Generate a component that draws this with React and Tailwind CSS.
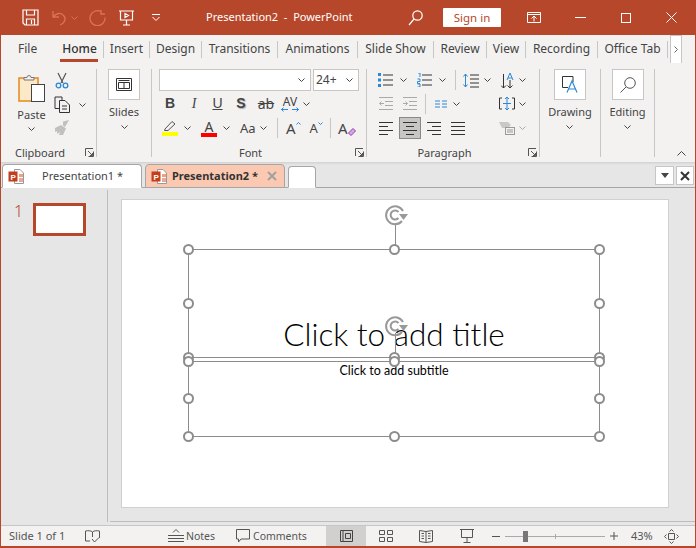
const Chev = ({ className = '', color = '#444' }) => (
  <svg width="7" height="4" viewBox="0 0 7 4" className={`shrink-0 ${className}`} fill="none" stroke={color} strokeWidth="1">
    <path d="M0.5 0.5 3.5 3.5 6.5 0.5" />
  </svg>
);

const Launcher = () => (
  <svg width="9" height="9" viewBox="0 0 9 9" fill="none" stroke="#555" strokeWidth="1">
    <path d="M0.5 8V0.5H8M8.5 3.5V8.5H3.5M3 3 7.5 7.5M7.5 5V7.5H5" />
  </svg>
);

const Lines = ({ w = 14, d }) => (
  <svg width={w} height="14" viewBox={`0 0 ${w} 14`} fill="none" stroke="#333" strokeWidth="1">
    <path d={d} />
  </svg>
);

const PptIcon = () => (
  <svg width="17" height="17" viewBox="0 0 17 17" className="shrink-0">
    <path d="M6.5 1.5H12L15.5 5V15.5H6.5Z" fill="#fff" stroke="#999" />
    <path d="M11 6h4v3h-4z" fill="#f0a080" />
    <path d="M11 11h4M11 13h4" stroke="#d35230" />
    <rect x="0.5" y="3.5" width="9" height="10" fill="#c43e1c" />
    <text x="2.5" y="11.5" fontSize="8" fontWeight="700" fontFamily="Liberation Sans, sans-serif" fill="#fff">P</text>
  </svg>
);

const Handle = ({ className }) => (
  <div className={`absolute h-[11px] w-[11px] rounded-full border-2 border-[#8c8c8c] bg-white ${className}`} />
);

const RotateIcon = ({ className }) => (
  <svg width="26" height="24" viewBox="0 0 26 24" className={`absolute ${className}`} fill="none" stroke="#999" strokeWidth="2">
    <path d="M18 17A9 9 0 1 1 19 7" />
    <path d="M14.500 14A4.500 4.500 0 1 1 14.500 8" />
    <path d="M15 10 24 10 19.500 16Z" fill="#999" stroke="none" />
  </svg>
);

function Placeholder({ className, children }) {
  return (
    <div className={`absolute left-[66px] w-[412px] border border-[#8c8c8c] ${className}`}>
      {children}
      <Handle className="left-[-6px] top-[-6px]" />
      <Handle className="left-[200px] top-[-6px]" />
      <Handle className="right-[-6px] top-[-6px]" />
      <Handle className="left-[-6px] top-[calc(50%-6px)]" />
      <Handle className="right-[-6px] top-[calc(50%-6px)]" />
      <Handle className="left-[-6px] bottom-[-6px]" />
      <Handle className="left-[200px] bottom-[-6px]" />
      <Handle className="right-[-6px] bottom-[-6px]" />
    </div>
  );
}

const tabs = [
  ['Insert', 'w-[45px]'],
  ['Design', 'w-[51px]'],
  ['Transitions', 'w-[75px]'],
  ['Animations', 'w-[79px]'],
  ['Slide Show', 'w-[75px]'],
  ['Review', 'w-[52px]'],
  ['View', 'w-[38px]'],
  ['Recording', 'w-[71px]'],
  ['Office Tab', 'w-[69px]'],
];

const Sep = ({ className = 'h-[88px] mt-[6px]' }) => <div className={`w-px shrink-0 bg-[#c8c6c4] ${className}`} />;

function Group({ className, label, launcher, children }) {
  return (
    <div className={`flex shrink-0 flex-col pt-[6px] ${className}`}>
      <div className="h-[76px]">{children}</div>
      <div className="flex h-[14px] items-center text-[11px] leading-none text-[#444]">
        <span className="flex-1 pr-[6px] text-center">{label}</span>
        {launcher && <span className="mr-[2px] flex"><Launcher /></span>}
      </div>
    </div>
  );
}

function BigButton({ label, children }) {
  return (
    <div className="flex flex-col items-center">
      <div className="flex h-[31px] w-[32px] items-center justify-center border border-[#c8c6c4] bg-white">{children}</div>
      <span className="mt-[4px] text-[11px] leading-[16px] text-[#444]">{label}</span>
      <Chev className="mt-[5px]" />
    </div>
  );
}

export default function App() {
  return (
    <div className="flex h-[548px] w-[696px] flex-col overflow-hidden border-x border-b-2 border-[#b7472a] bg-[#e6e6e6] font-['Noto_Sans',sans-serif] text-[#444]">
      {/* title bar */}
      <div className="flex h-[35px] shrink-0 items-center bg-[#b7472a] text-white">
        <svg width="17" height="17" viewBox="0 0 17 17" className="ml-[21px]" fill="none" stroke="#fff" strokeWidth="1.200">
          <path d="M1 1H16V16H3L1 14Z M4.500 1V6H12.500V1 M4.500 16V10H12.500V16 M9.500 11V15" />
        </svg>
        <svg width="15" height="16" viewBox="0 0 15 16" className="ml-[13px]" fill="none" stroke="#d9735a" strokeWidth="1.300">
          <path d="M1 1V7H7M1 7C4 3 9 2 12 6C15 10 11 14 8 15" />
        </svg>
        <Chev className="ml-[4px]" color="#d9735a" />
        <svg width="17" height="17" viewBox="0 0 17 17" className="ml-[11px]" fill="none" stroke="#d9735a" strokeWidth="1.300">
          <path d="M12 2.500A7.500 7.500 0 1 0 16 8.500M12 1V5H16" />
        </svg>
        <svg width="15" height="16" viewBox="0 0 15 16" className="ml-[13px]" fill="none" stroke="#fff" strokeWidth="1.200">
          <path d="M0 1H15M1.500 1V10H13.500V1M7.500 10V15M4 15H11M6 3.500V7.500L9.500 5.500Z" />
        </svg>
        <svg width="8" height="7" viewBox="0 0 8 7" className="ml-[18px]" fill="none" stroke="#fff">
          <path d="M0 0.500H8M0.500 3 4 6.500 7.500 3" />
        </svg>
        <span className="ml-[46px] w-[150px] whitespace-nowrap text-[11px]">Presentation2 &nbsp;-&nbsp; PowerPoint</span>
        <svg width="15" height="16" viewBox="0 0 15 16" className="ml-[52px]" fill="none" stroke="#fff" strokeWidth="1.200">
          <circle cx="9.500" cy="5.500" r="4.700" />
          <path d="M6 9 1 15" />
        </svg>
        <div className="ml-[20px] flex h-[19px] w-[58px] items-center justify-center rounded-[1px] bg-white text-[11.500px] text-[#b7472a]">Sign in</div>
        <svg width="14" height="11" viewBox="0 0 14 11" className="ml-[26px]" fill="none" stroke="#fff">
          <path d="M0.500 0.500H13.500V10.500H0.500ZM0.500 2.500H13.500M7 9.500V4.500M4.500 6.500 7 4 9.500 6.500" />
        </svg>
        <div className="ml-[34px] h-px w-[11px] bg-white" />
        <div className="ml-[35px] h-[10px] w-[10px] border border-white" />
        <svg width="11" height="11" viewBox="0 0 11 11" className="ml-[35px]" fill="none" stroke="#fff">
          <path d="M0.500 0.500 10.500 10.500M10.500 0.500 0.500 10.500" />
        </svg>
      </div>

      {/* ribbon tabs */}
      <div className="flex h-[28px] shrink-0 items-center bg-[#f3f2f1] text-[12px]">
        <div className="w-[55px] pl-[17px]">File</div>
        <div className="relative flex h-full w-[47px] items-center justify-center font-medium text-[#333]">
          Home
          <div className="absolute bottom-[1px] left-[4px] h-[3px] w-[38px] bg-[#b7472a]" />
        </div>
        {tabs.map(([name, width]) => (
          <div key={name} className="flex items-center">
            <Sep className="h-[17px]" />
            <div className={`whitespace-nowrap text-center ${width}`}>{name}</div>
          </div>
        ))}
        <Sep className="h-[17px]" />
        <div className="ml-[2px] flex h-[29px] w-[12px] items-center justify-center self-start border border-[#c8c6c4] bg-white">
          <svg width="4" height="7" viewBox="0 0 4 7" fill="none" stroke="#666"><path d="M0.500 0.500 3.500 3.500 0.500 6.500" /></svg>
        </div>
      </div>

      {/* ribbon */}
      <div className="flex h-[99px] shrink-0 bg-[#f3f2f1]">
        <Group className="w-[95px]" label="Clipboard" launcher>
          <div className="flex">
            <div className="ml-[17px] flex w-[27px] flex-col items-center pt-[6px]">
              <svg width="28" height="28" viewBox="0 0 28 28" fill="none">
                <rect x="1" y="3" width="19" height="23" fill="#fbe9c8" stroke="#e8871e" strokeWidth="1.500" />
                <path d="M6 5V2.500H9A2 2 0 0 1 13 2.500H16V5Z" fill="#f3f2f1" stroke="#777" />
                <rect x="13.500" y="9.500" width="13" height="17" fill="#fff" stroke="#444" />
              </svg>
              <span className="mt-[4px] text-[11px] leading-[16px]">Paste</span>
              <Chev className="mt-[4px]" />
            </div>
            <div className="ml-[9px] flex flex-col">
              <svg width="14" height="17" viewBox="0 0 14 17" className="ml-[1px] mt-[3px]" fill="none">
                <path d="M3 1 8 11M11 1 6 11" stroke="#555" strokeWidth="1.200" />
                <circle cx="3.500" cy="13.500" r="2.300" stroke="#2b88d8" strokeWidth="1.300" />
                <circle cx="10.500" cy="13.500" r="2.300" stroke="#2b88d8" strokeWidth="1.300" />
              </svg>
              <div className="mt-[7px] flex items-center">
                <svg width="17" height="17" viewBox="0 0 17 17" fill="none" stroke="#333">
                  <path d="M5.500 12.500H1V1H8V4M5.500 4.500H11L15.500 9V16.500H5.500ZM8 10H13M8 13H13" />
                </svg>
                <Chev className="ml-[8px]" />
              </div>
              <svg width="16" height="16" viewBox="0 0 16 16" className="mt-[7px]" fill="#c0c0c0">
                <path d="M9 1.500 15 0 11 7 9 5.500ZM1 8 7 5 12 8.500 9 15 5 15 6 12 3 14 3 11 1 12Z" />
              </svg>
            </div>
          </div>
        </Group>
        <Sep />
        <Group className="w-[54px]" label="">
          <div className="flex justify-center">
            <BigButton label="Slides">
              <svg width="16" height="13" viewBox="0 0 16 13" fill="none" stroke="#333">
                <path d="M0.500 0.500H15.500V12.500H0.500ZM2.500 2.500H13.500M2.500 4.500H13.500V10.500H2.500ZM8 4.500V10.500" />
              </svg>
            </BigButton>
          </div>
        </Group>
        <Sep />

        <Group className="w-[214px]" label="Font" launcher>
          <div className="flex h-[22px] pl-[7px]">
            <div className="flex w-[152px] items-center justify-end border border-[#c8c6c4] bg-white pr-[5px]"><Chev /></div>
            <div className="ml-[2px] flex w-[46px] items-center justify-between border border-[#c8c6c4] bg-white pl-[2px] pr-[5px] text-[12px]">24+<Chev /></div>
          </div>
          <div className="flex h-[25px] items-center pl-[6px] text-[14px] text-[#444]">
            <span className="w-[24px] text-center font-['Liberation_Sans',sans-serif] font-bold">B</span>
            <span className="w-[24px] text-center font-['Liberation_Serif',serif] italic">I</span>
            <span className="w-[23px] text-center font-['Liberation_Sans',sans-serif] underline">U</span>
            <span className="w-[24px] text-center font-['Liberation_Sans',sans-serif] font-bold [text-shadow:1px_1px_1px_#aaa]">S</span>
            <span className="w-[26px] text-center line-through">ab</span>
            <div className="flex w-[22px] flex-col items-center">
              <span className="text-[12px] leading-[11px]">AV</span>
              <svg width="18" height="5" viewBox="0 0 18 5" fill="none" stroke="#2b88d8"><path d="M0 2.500H7M2.500 0.500 0.500 2.500 2.500 4.500M11 2.500H18M15.500 0.500 17.500 2.500 15.500 4.500" /></svg>
            </div>
            <Chev className="ml-[2px]" />
          </div>
          <div className="flex h-[24px] items-center">
            <div className="ml-[10px] flex w-[16px] flex-col items-center">
              <svg width="14" height="12" viewBox="0 0 14 12" fill="none" stroke="#555"><path d="M2 9 9 1.500 12 4 5 10.500H1.500Z" /></svg>
              <div className="h-[4px] w-[16px] bg-[#ffff00]" />
            </div>
            <Chev className="ml-[6px]" />
            <div className="ml-[10px] flex w-[16px] flex-col items-center">
              <span className="text-[14px] leading-[13px]">A</span>
              <div className="h-[4px] w-[16px] bg-[#ff0000]" />
            </div>
            <Chev className="ml-[6px]" />
            <span className="ml-[10px] w-[18px] text-[13px] leading-none">Aa</span>
            <Chev className="ml-[2px]" />
            <Sep className="ml-[10px] h-[20px]" />
            <span className="ml-[8px] text-[15px] leading-none">A</span>
            <svg width="5" height="3" viewBox="0 0 5 3" className="mb-[10px]" fill="none" stroke="#2b88d8"><path d="M0.500 2.500 2.500 0.500 4.500 2.500" /></svg>
            <span className="ml-[9px] text-[13px] leading-none">A</span>
            <svg width="5" height="3" viewBox="0 0 5 3" className="mb-[10px]" fill="none" stroke="#2b88d8"><path d="M0.500 0.500 2.500 2.500 4.500 0.500" /></svg>
            <Sep className="ml-[7px] h-[20px]" />
            <span className="ml-[7px] text-[15px] leading-none">A</span>
            <svg width="8" height="8" viewBox="0 0 8 8" className="mt-[7px]" fill="#d9a6e8" stroke="#8a3fa8"><path d="M0.500 5 5 0.500 7.500 3 3 7.500Z" /></svg>
          </div>
        </Group>
        <Sep />

        <Group className="w-[172px]" label="Paragraph" launcher>
          <div className="flex h-[22px] items-center">
            <svg width="15" height="14" viewBox="0 0 15 14" className="ml-[11px]" fill="none">
              <path d="M5 2H15M5 7H15M5 12H15" stroke="#333" />
              <path d="M0 0H3V3H0ZM0 5.500H3V8.500H0ZM0 11H3V14H0Z" fill="#2b88d8" />
            </svg>
            <Chev className="ml-[7px]" />
            <svg width="15" height="14" viewBox="0 0 15 14" className="ml-[10px]" fill="none">
              <path d="M5 2H15M5 7H15M5 12H15" stroke="#333" />
              <path d="M1 0H3V4M0.500 6H3V8.500H0.500V10.500H3M0.500 11H3V14H0.500" stroke="#2b88d8" />
            </svg>
            <Chev className="ml-[7px]" />
            <Sep className="ml-[9px] h-[20px]" />
            <svg width="16" height="15" viewBox="0 0 16 15" className="ml-[7px]" fill="none">
              <path d="M7 2H16M7 6H16M7 10H16M7 14H16" stroke="#333" />
              <path d="M2.500 1V14M0.500 3.500 2.500 1 4.500 3.500M0.500 11.500 2.500 14 4.500 11.500" stroke="#2b88d8" />
            </svg>
            <Chev className="ml-[5px]" />
            <div className="ml-[10px] flex w-[14px] items-end">
              <svg width="14" height="17" viewBox="0 0 14 17" fill="none">
                <path d="M2.500 2V16M0 13.500 2.500 16 5 13.500M9 8V16M6.500 13.500 9 16 11.500 13.500" stroke="#333" />
                <path d="M6 8 9 1 12 8M7 6H11" stroke="#2b88d8" />
              </svg>
            </div>
            <Chev className="ml-[4px]" />
          </div>
          <div className="flex h-[25px] items-center">
            <svg width="14" height="13" viewBox="0 0 14 13" className="ml-[12px]" fill="none">
              <path d="M0 0.500H14M6 4.500H14M6 8.500H14M0 12.500H14" stroke="#aaa" />
              <path d="M5 6.500H0.500M2.500 4.500 0.500 6.500 2.500 8.500" stroke="#aaa" />
            </svg>
            <svg width="14" height="13" viewBox="0 0 14 13" className="ml-[10px]" fill="none">
              <path d="M0 0.500H14M6 4.500H14M6 8.500H14M0 12.500H14" stroke="#aaa" />
              <path d="M0 6.500H4.500M2.500 4.500 4.500 6.500 2.500 8.500" stroke="#aaa" />
            </svg>
            <Sep className="ml-[8px] h-[20px]" />
            <svg width="12" height="8" viewBox="0 0 12 8" className="ml-[9px]" fill="none" stroke="#2b88d8">
              <path d="M0 1H5M7 1H12M0 4H5M7 4H12M0 7H5M7 7H12" />
            </svg>
            <Chev className="ml-[6px]" />
            <svg width="16" height="15" viewBox="0 0 16 15" className="ml-[39px]" fill="none">
              <path d="M3 2H0.500V13H3M13 2H15.500V13H13" stroke="#333" />
              <path d="M8 1V14M6 3 8 1 10 3M6 12 8 14 10 12M4 7.500H12" stroke="#2b88d8" />
            </svg>
            <Chev className="ml-[4px]" />
          </div>
          <div className="flex h-[24px] items-center pl-[12px]">
            <Lines d="M0 1.500H14M0 5.500H9M0 9.500H14M0 13.500H9" />
            <div className="ml-[6px] flex h-[22px] w-[22px] items-center justify-center border border-[#8a8886] bg-[#c8c6c4]">
              <Lines d="M0 1.500H14M3 5.500H11M0 9.500H14M3 13.500H11" />
            </div>
            <div className="ml-[6px] flex"><Lines d="M0 1.500H14M5 5.500H14M0 9.500H14M5 13.500H14" /></div>
            <div className="ml-[10px] flex"><Lines d="M0 1.500H14M0 5.500H14M0 9.500H14M0 13.500H14" /></div>
            <svg width="16" height="14" viewBox="0 0 16 14" className="ml-[34px]" fill="none">
              <path d="M0 1H9L12 4 9 7H3Z" fill="#c8c8c8" />
              <rect x="6.500" y="6.500" width="9" height="7" fill="#f3f2f1" stroke="#999" />
              <path d="M8 9H14M8 11H14" stroke="#999" />
            </svg>
            <Chev className="ml-[4px]" color="#aaa" />
          </div>
        </Group>
        <Sep />

        <Group className="w-[60px]" label="">
          <div className="flex justify-center">
            <BigButton label="Drawing">
              <svg width="16" height="17" viewBox="0 0 16 17" fill="none">
                <path d="M6 11.500H0.500V0.500H11V6" stroke="#333" />
                <path d="M5 16.500 10 5 15 16.500M6.500 13H13.500" stroke="#2b88d8" strokeWidth="1.200" />
              </svg>
            </BigButton>
          </div>
        </Group>
        <Sep />
        <Group className="w-[53px]" label="">
          <div className="flex justify-center">
            <BigButton label="Editing">
              <svg width="16" height="16" viewBox="0 0 16 16" fill="none" stroke="#555">
                <circle cx="10" cy="6" r="5.300" />
                <path d="M6 10 0.500 15.500" />
              </svg>
            </BigButton>
          </div>
        </Group>
        <Sep />
        <div className="flex flex-1 items-end justify-end pb-[6px] pr-[9px]">
          <svg width="9" height="5" viewBox="0 0 9 5" fill="none" stroke="#444"><path d="M0.500 4.500 4.500 0.500 8.500 4.500" /></svg>
        </div>
      </div>
      <div className="h-[3px] shrink-0 bg-gradient-to-b from-[#d2d2d2] to-[#e6e6e6]" />

      {/* document tabs */}
      <div className="flex h-[23px] shrink-0 items-end gap-[3px] border-b border-[#a6a6a6] pl-[1px]">
        <div className="mb-[-1px] flex h-[24px] w-[140px] shrink-0 items-center rounded-t-[4px] border border-[#a6a6a6] border-b-white bg-white pl-[5px] text-[11px]">
          <PptIcon />
          <span className="ml-[17px] whitespace-nowrap">Presentation1 *</span>
        </div>
        <div className="mb-[-1px] flex h-[24px] w-[140px] shrink-0 items-center rounded-t-[4px] border border-[#a6a6a6] bg-[#fbc9b1] pl-[5px] text-[11px] font-bold">
          <PptIcon />
          <span className="ml-[4px] whitespace-nowrap text-[#333]">Presentation2 *</span>
          <svg width="10" height="10" viewBox="0 0 10 10" className="ml-[9px]" fill="none" stroke="#a0a0a0" strokeWidth="2"><path d="M1 1 9 9M9 1 1 9" /></svg>
        </div>
        <div className="mb-[-1px] h-[22px] w-[28px] shrink-0 rounded-t-[4px] border border-[#a6a6a6] border-b-white bg-white" />
        <div className="mb-[2px] ml-auto flex h-[19px] w-[19px] items-center justify-center border border-[#c8c6c4] bg-white">
          <div className="h-0 w-0 border-x-[4px] border-t-[5px] border-x-transparent border-t-[#444]" />
        </div>
        <div className="mb-[2px] ml-[-1px] mr-[1px] flex h-[19px] w-[18px] items-center justify-center border border-[#c8c6c4] bg-white">
          <svg width="10" height="10" viewBox="0 0 10 10" fill="none" stroke="#333" strokeWidth="2"><path d="M1 1 9 9M9 1 1 9" /></svg>
        </div>
      </div>

      {/* workspace */}
      <div className="flex min-h-0 flex-1">
        <div className="flex w-[106px] shrink-0 items-start pl-[13px] pt-[15px]">
          <span className="w-[19px] text-[16px] font-light leading-none text-[#b7472a]">1</span>
          <div className="h-[33px] w-[53px] border-[3px] border-[#b7472a] bg-white" />
        </div>
        <div className="mb-[3px] mt-[2px] w-px shrink-0 bg-[#bdbdbd]" />
        <div className="mb-[3px] ml-[2px] flex-1 border-b border-[#bdbdbd] pl-[11px] pt-[11px]">
          <div className="relative h-[309px] w-[548px] border border-[#d0d0d0] bg-white font-['Lato',sans-serif] text-black">
            <Placeholder className="top-[49px] h-[109px]">
              <div className="absolute inset-x-0 bottom-[1px] text-center text-[31.500px] font-light leading-[44px]">Click to add title</div>
              <div className="absolute left-[206px] top-[-27px] h-[22px] w-px bg-[#8c8c8c]" />
              <div className="absolute left-[206px] top-[83px] h-[22px] w-px bg-[#8c8c8c]" />
            </Placeholder>
            <Placeholder className="top-[161px] h-[76px]">
              <div className="absolute inset-x-0 top-0 text-center text-[12.500px] leading-[18px]">Click to add subtitle</div>
            </Placeholder>
            <RotateIcon className="left-[262px] top-[4px]" />
            <RotateIcon className="left-[262px] top-[115px]" />
          </div>
        </div>
      </div>

      {/* status bar */}
      <div className="flex h-[21px] shrink-0 items-center border-t border-[#c8c6c4] bg-[#f3f2f1] text-[11px] text-[#555]">
        <span className="ml-[8px] w-[76px] whitespace-nowrap">Slide 1 of 1</span>
        <svg width="15" height="13" viewBox="0 0 15 13" fill="none" stroke="#555">
          <path d="M7.500 2C6 0.500 3 0.500 0.500 1V11H5M7.500 2C9 0.500 12 0.500 14.500 1V8M7.500 2V7M7 9 9.500 12 14 7.500" />
        </svg>
        <svg width="16" height="14" viewBox="0 0 16 14" className="ml-[68px]" fill="none" stroke="#555">
          <path d="M0 6.500H16M0 9.500H16M0 12.500H16M5 3.500 8 0.500 11 3.500" />
        </svg>
        <span className="ml-[2px] mt-[2px] w-[50px] text-[10.500px]">Notes</span>
        <svg width="14" height="14" viewBox="0 0 14 14" fill="none" stroke="#555">
          <path d="M0.500 0.500H13.500V10H5L2.500 13V10H0.500Z" />
        </svg>
        <span className="ml-[3px] mt-[2px] w-[73px] text-[10.500px]">Comments</span>
        <div className="flex h-full w-[40px] items-center justify-center bg-[#d2d0ce]">
          <svg width="13" height="12" viewBox="0 0 13 12" fill="none" stroke="#444"><path d="M0.500 0.500H12.500V11.500H0.500ZM3 0.500V11.500M5.500 3.500H10.500V8.500H5.500Z" /></svg>
        </div>
        <svg width="14" height="12" viewBox="0 0 14 12" className="ml-[13px]" fill="none" stroke="#555"><path d="M0.500 0.500H5.500V4.500H0.500ZM8.500 0.500H13.500V4.500H8.500ZM0.500 7.500H5.500V11.500H0.500ZM8.500 7.500H13.500V11.500H8.500Z" /></svg>
        <svg width="14" height="13" viewBox="0 0 14 13" className="ml-[26px]" fill="none" stroke="#555"><path d="M7 1.500 0.500 0.500V11.500L7 12.500 13.500 11.500V0.500ZM7 1.500V12.500M2.500 3.500H5M2.500 6H5M2.500 8.500H5M9 3.500H11.500M9 6H11.500M9 8.500H11.500" /></svg>
        <svg width="14" height="14" viewBox="0 0 14 14" className="ml-[27px]" fill="none" stroke="#555"><path d="M0 0.500H14M1.500 0.500V8.500H12.500V0.500M7 8.500V13.500M3.500 13.500H10.500" /></svg>
        <div className="ml-[18px] h-px w-[8px] bg-[#555]" />
        <div className="ml-[5px] flex h-[11px] w-[100px] items-center">
          <div className="h-px w-[18px] bg-[#aaa]" />
          <div className="h-[11px] w-[5px] bg-[#777]" />
          <div className="h-px w-[27px] bg-[#aaa]" />
          <div className="h-[5px] w-px bg-[#aaa]" />
          <div className="h-px flex-1 bg-[#aaa]" />
        </div>
        <svg width="8" height="8" viewBox="0 0 8 8" className="ml-[5px]" fill="none" stroke="#555"><path d="M0 4H8M4 0V8" /></svg>
        <span className="ml-[13px] w-[33px]">43%</span>
        <svg width="15" height="15" viewBox="0 0 15 15" fill="none" stroke="#555"><path d="M4.500 4.500H10.500V10.500H4.500ZM5.500 2.500 7.500 0.500 9.500 2.500M5.500 12.500 7.500 14.500 9.500 12.500M2.500 5.500 0.500 7.500 2.500 9.500M12.500 5.500 14.500 7.500 12.500 9.500" /></svg>
      </div>
    </div>
  );
}
